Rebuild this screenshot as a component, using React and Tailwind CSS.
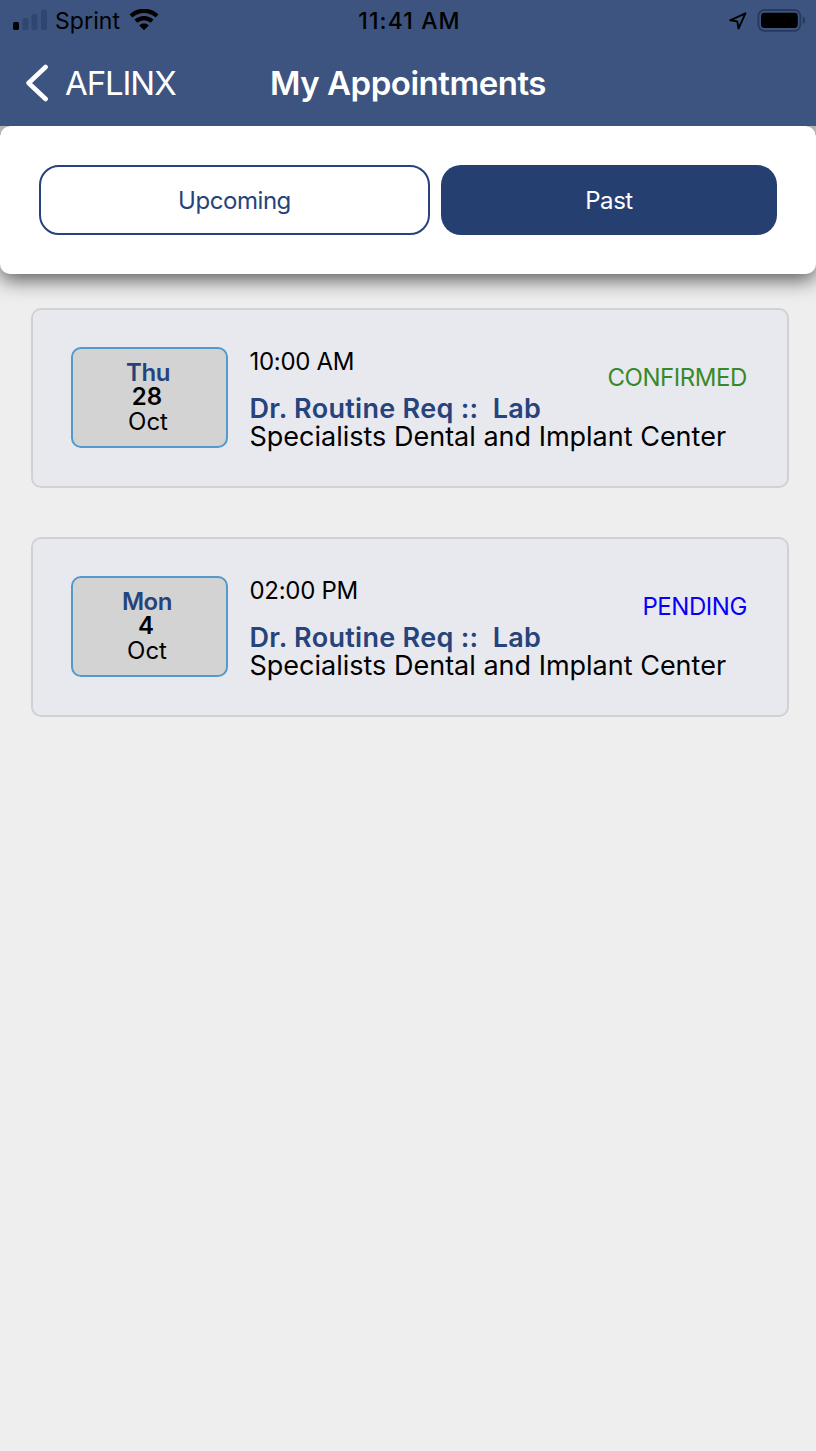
import React from "react";

const appointments = [
  {
    id: 1,
    weekday: "Thu",
    day: "28",
    month: "Oct",
    time: "10:00 AM",
    doctor: "Dr. Routine Req ::\u00a0 Lab",
    location: "Specialists Dental and Implant Center",
    status: "CONFIRMED",
    statusClass: "text-[#38892a]",
    dateClass: "pr-[3px]",
    dayClass: "pr-[2px]",
  },
  {
    id: 2,
    weekday: "Mon",
    day: "4",
    month: "Oct",
    time: "02:00 PM",
    doctor: "Dr. Routine Req ::\u00a0 Lab",
    location: "Specialists Dental and Implant Center",
    status: "PENDING",
    statusClass: "text-[#0a00f5]",
    dateClass: "pr-[5px]",
    dayClass: "pr-[2px]",
  },
];

function SignalIcon() {
  return (
    <svg width="34" height="22" viewBox="0 0 34 22" className="shrink-0">
      <rect x="0" y="13" width="6" height="8" rx="1.8" fill="#000" />
      <rect x="9.5" y="9" width="6" height="12" rx="1.8" fill="#304670" />
      <rect x="18.5" y="5" width="6" height="16" rx="1.8" fill="#304670" />
      <rect x="28" y="0.5" width="6" height="20.5" rx="1.8" fill="#304670" />
    </svg>
  );
}

function WifiIcon() {
  return (
    <svg width="30" height="22" viewBox="0 0 30 22" className="shrink-0" fill="none" stroke="#000">
      <path d="M2 7C9.4 0.2 20.6 0.2 28 7" strokeWidth="4.4" />
      <path d="M6.9 12.3C11.6 8 18.4 8 23.1 12.3" strokeWidth="4.2" />
      <path d="M15 21.2L10.2 16.4C13 14 17 14 19.8 16.4Z" fill="#000" stroke="none" />
    </svg>
  );
}

function LocationIcon() {
  return (
    <svg width="18" height="18" viewBox="0 0 18 18" className="mt-px" fill="none" stroke="#000" strokeWidth="1.9" strokeLinejoin="round">
      <path d="M16.4 1.4L1.2 8.3L8.3 9.4L9.5 16.6Z" />
    </svg>
  );
}

function BatteryIcon() {
  return (
    <svg width="49" height="23" viewBox="0 0 49 23">
      <rect x="1.4" y="1" width="42" height="20.8" rx="6" fill="none" stroke="#273a5e" strokeWidth="1.8" />
      <rect x="4" y="3.8" width="36.8" height="15.2" rx="3.4" fill="#000" />
      <path d="M45.8 7.8C49 9 49 14 45.8 15.2Z" fill="#273a5e" />
    </svg>
  );
}

function StatusBar() {
  return (
    <div className="grid h-10 grid-cols-[1fr_auto_1fr] items-center pl-[13px] pr-[10px] text-black">
      <div className="flex items-center">
        <SignalIcon />
        <span className="ml-2 mr-[9px] pt-0.5 text-[23px] leading-7 tracking-[0.1px]">Sprint</span>
        <WifiIcon />
      </div>
      <span className="pt-0.5 text-[23px] font-medium leading-7 tracking-[1.1px]">11:41 AM</span>
      <div className="flex items-center justify-end gap-[10px]">
        <LocationIcon />
        <BatteryIcon />
      </div>
    </div>
  );
}

function NavBar() {
  return (
    <div className="grid h-[86px] grid-cols-[1fr_auto_1fr] items-center pl-[25px] pr-[25px] text-white">
      <div className="flex items-center gap-4">
        <svg width="24" height="38" viewBox="0 0 24 38" fill="none" stroke="#fff" strokeWidth="4.6" strokeLinecap="round" strokeLinejoin="round">
          <path d="M20.6 3L3.6 19L20.6 35" />
        </svg>
        <span className="text-[33px] leading-10 tracking-[-1.1px]">AFLINX</span>
      </div>
      <h1 className="text-[33px] font-semibold leading-10 tracking-[-0.48px]">My Appointments</h1>
    </div>
  );
}

function AppointmentCard({ item }) {
  return (
    <div className="flex h-[180px] rounded-[10px] border-2 border-[#d1d1d4] bg-[#e8e9ef] pl-[38px] pr-10 pt-[37px]">
      <div className="h-[101px] w-[157px] shrink-0 rounded-[10px] border-2 border-[#5499ca] bg-[#d3d3d3] pt-[12px] text-center text-[24px] leading-[24.4px]">
        <div className={item.dateClass}>
          <p className="font-semibold tracking-[-0.4px] text-[#27437b]">{item.weekday}</p>
          <p className={`font-semibold ${item.dayClass}`}>{item.day}</p>
          <p>{item.month}</p>
        </div>
      </div>
      <div className="ml-[21.5px] min-w-0 flex-1 pt-0.5">
        <div className="flex h-[46px] items-start justify-between">
          <span className="text-[24px] leading-[26px] tracking-[-0.3px]">{item.time}</span>
          <span className={`mt-4 text-[24px] leading-[26px] tracking-[-0.43px] ${item.statusClass}`}>{item.status}</span>
        </div>
        <p className="whitespace-nowrap text-[27px] font-semibold leading-7 tracking-[0.3px] text-[#27437b]">{item.doctor}</p>
        <p className="whitespace-nowrap text-[27px] leading-7">{item.location}</p>
      </div>
    </div>
  );
}

export default function App() {
  return (
    <div className="min-h-[1451px] w-full bg-[#eeeeee] font-['Inter',sans-serif] text-black [font-feature-settings:'calt'_0]">
      <header className="bg-[#3c547f]">
        <StatusBar />
        <NavBar />
      </header>

      <div className="bg-[linear-gradient(#b4b4b4_0,#b4b4b4_12px,transparent_12px)]">
        <div className="flex h-[148px] gap-[11px] rounded-[10px] bg-white px-[39px] pt-[39px] shadow-[0_6px_20px_rgba(0,0,0,0.62)] [clip-path:inset(0_0_-40px_0_round_10px)]">
          <button className="h-[70px] w-[391px] rounded-[20px] border-2 border-[#27437b] pt-0.5 text-[24px] tracking-[-0.45px] text-[#27437b]">
            Upcoming
          </button>
          <button className="h-[70px] flex-1 rounded-[20px] bg-[#253f70] pt-0.5 text-[24px] tracking-[-0.45px] text-white">
            Past
          </button>
        </div>
      </div>

      <main className="flex flex-col gap-[49px] pl-[31px] pr-[27px] pt-[34px]">
        {appointments.map((item) => (
          <AppointmentCard key={item.id} item={item} />
        ))}
      </main>
    </div>
  );
}
